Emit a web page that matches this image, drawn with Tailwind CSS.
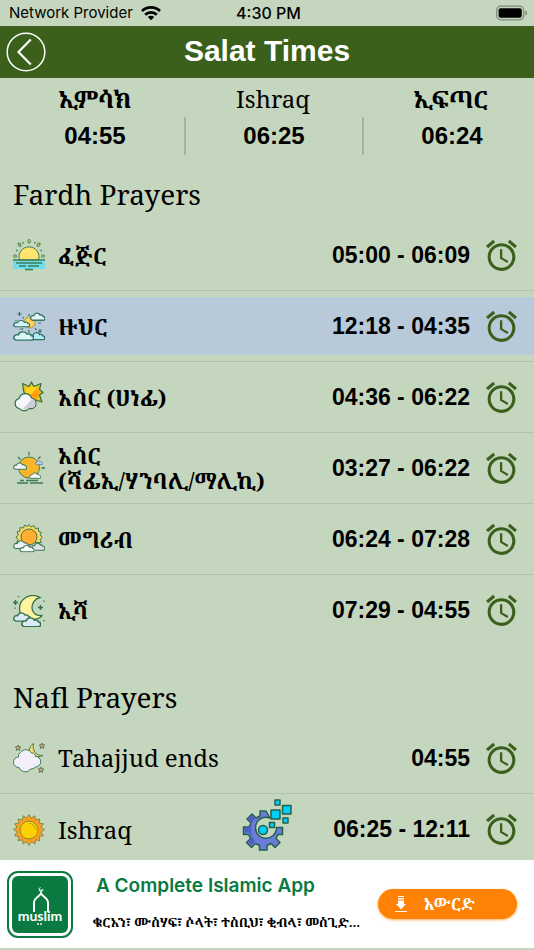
<!DOCTYPE html>
<html lang="am">
<head>
    <meta charset="UTF-8">
    <meta name="viewport" content="width=device-width, initial-scale=1.0">
    <title>Salat Times</title>
    <script src="https://cdn.jsdelivr.net/npm/@tailwindcss/browser@4"></script>
</head>
<body class="bg-[#c5d6be] text-black font-['Noto_Serif','Noto_Serif_Ethiopic','Liberation_Serif',serif]">
<!-- shared shapes -->
<svg class="hidden" aria-hidden="true">
    <symbol id="alarm" viewBox="0 0 24 24">
        <path fill="#3a601c" d="M22 5.72l-4.6-3.86-1.29 1.53 4.6 3.86L22 5.72zM7.88 3.39L6.6 1.86 2 5.71l1.29 1.53 4.59-3.85zM12.5 8H11v6l4.75 2.85.75-1.23-4-2.37V8zM12 4c-4.97 0-9 4.03-9 9s4.02 9 9 9c4.97 0 9-4.03 9-9s-4.03-9-9-9zm0 16c-3.87 0-7-3.13-7-7s3.13-7 7-7 7 3.13 7 7-3.13 7-7 7z"/>
    </symbol>
    <symbol id="cloud" viewBox="0 0 20 12" preserveAspectRatio="none">
        <path d="M3 11H17a2.500 2.500 0 0 0 .5-5 3 3 0 0 0-4-1.800A4.500 4.500 0 0 0 5 5 3 3 0 0 0 3 11Z"/>
    </symbol>
</svg>

<div class="h-screen flex flex-col">
    <!-- status bar -->
    <div class="h-[26px] shrink-0 grid grid-cols-3 items-center pl-[9px] pr-1.5 font-['Inter',sans-serif] text-[15px]">
        <div class="flex items-center gap-2 whitespace-nowrap">
            <span>Network Provider</span>
            <svg class="w-5 h-4 shrink-0" viewBox="0 0 20 16" fill="none" stroke="#000" stroke-width="2.800">
                <path d="M1 6a13 13 0 0 1 18 0"/>
                <path d="M4.200 9.700a8.400 8.400 0 0 1 11.600 0"/>
                <path d="M10 15.200 6.800 12a4.500 4.500 0 0 1 6.400 0Z" fill="#000" stroke="none"/>
            </svg>
        </div>
        <div class="text-center font-medium text-base">4:30 PM</div>
        <svg class="w-8 h-4 justify-self-end" viewBox="0 0 32 16">
            <rect x=".7" y="1.200" width="27" height="13.600" rx="4" fill="none" stroke="#7e8a79" stroke-width="1.200"/>
            <rect x="2.600" y="3.200" width="23.200" height="9.600" rx="2" fill="#000"/>
            <path d="M29.200 5.500a2.600 2.600 0 0 1 0 5Z" fill="#7e8a79"/>
        </svg>
    </div>

    <!-- header -->
    <header class="h-[52px] shrink-0 flex items-center bg-[#3a601c] px-1.5">
        <button class="w-10 h-10" aria-label="Back">
            <svg class="w-10 h-10" viewBox="0 0 40 40" fill="none" stroke="#fff">
                <circle cx="20" cy="20" r="18.800" stroke-width="1.500"/>
                <path d="M24.800 7.500 12.500 20 24.800 32.500" stroke-width="2.200"/>
            </svg>
        </button>
        <h1 class="flex-1 text-center text-white font-bold text-[30px] leading-10 pb-0.5 font-['Liberation_Sans',sans-serif] pr-10">Salat Times</h1>
    </header>

    <main class="flex-1 min-h-0 overflow-y-auto overflow-x-hidden [scrollbar-width:none]">
        <!-- top times -->
        <div class="grid grid-cols-3 text-center pt-[3px] ml-1.5 -mr-1.5">
            <div>
                <div class="h-9 leading-9 text-2xl font-bold">ኢምሳክ</div>
                <div class="h-[38px] leading-[38px] text-2xl font-bold font-['Liberation_Sans',sans-serif]">04:55</div>
            </div>
            <div>
                <div class="h-9 leading-9 text-2xl">Ishraq</div>
                <div class="h-[38px] leading-[38px] text-2xl font-bold font-['Liberation_Sans',sans-serif] border-l-2 border-[#a9aeab]">06:25</div>
            </div>
            <div>
                <div class="h-9 leading-9 text-2xl font-bold">ኢፍጣር</div>
                <div class="h-[38px] leading-[38px] text-2xl font-bold font-['Liberation_Sans',sans-serif] border-l-2 border-[#a9aeab]">06:24</div>
            </div>
        </div>

        <section>
            <h2 class="h-[65px] pt-4 px-[13px] leading-[46px] text-[28px]">Fardh Prayers</h2>
            <ul>
                <li class="h-[71px] flex items-center gap-[13px] pl-[13px] pr-3.5 border-b border-[#b1c2ae]">
                    <svg class="w-8 h-8 shrink-0" viewBox="0 0 32 32" fill="none" stroke="#3d7c55">
                        <rect y="21.500" width="32" height="8.500" fill="#6fdff0" stroke="none"/>
                        <path d="M6.500 21a10 10 0 1 1 19 0Z" fill="#ffe36e"/>
                        <path d="M0 21H32M3 24H29M6 27H13M15 27H26M12 30.500H20" stroke-width="1.300"/>
                        <g fill="#e8d84a">
                            <rect x="15" y=".5" width="2.200" height="3.500" rx="1"/>
                            <rect x="15" y=".5" width="2.200" height="3.500" rx="1" transform="rotate(40 16 17)"/>
                            <rect x="15" y=".5" width="2.200" height="3.500" rx="1" transform="rotate(-40 16 17)"/>
                            <rect x=".5" y="16" width="3" height="2.200" rx="1"/>
                            <rect x="28.500" y="16" width="3" height="2.200" rx="1"/>
                        </g>
                        <path d="M10 3v1.500M22 3v1.500M3 11.500h1.500M27.500 11.500H29" stroke-width="1.500"/>
                    </svg>
                    <span class="flex-1 text-[22px] font-bold">ፈጅር</span>
                    <time class="text-[23px] font-bold font-['Liberation_Sans',sans-serif]">05:00 - 06:09</time>
                    <button class="w-[37px] h-[37px]" aria-label="Alarm"><svg class="w-full h-full"><use href="#alarm"/></svg></button>
                </li>
                <li class="h-[71px] flex items-center border-b border-[#b1c2ae]">
                    <div class="h-[58px] flex-1 flex items-center gap-[13px] pl-[13px] pr-3.5 bg-[#b8c9da]">
                        <svg class="w-8 h-8 shrink-0" viewBox="0 0 32 32" fill="none" stroke="#2f7460">
                            <path d="M16 4v2M9.500 7l1.200 1.500M16 20v3M10 18l-1.500 2M22 18l1.500 2M25 13h3M6.500 2v4M4.500 4h4M27 19v4M25 21h4M3 10v1M7 18.500v1" stroke-width="1.200"/>
                            <circle cx="16.500" cy="12.500" r="5.500" fill="#ffd052" stroke="#a8913e"/>
                            <use href="#cloud" x="17" y="2" width="15" height="9" fill="#e2f6f8" stroke-width="1.700"/>
                            <use href="#cloud" x="0" y="9.500" width="17" height="8" fill="#d4f1f6" stroke-width="1.700"/>
                            <use href="#cloud" x="16" y="21.500" width="16" height="9" fill="#b5ecfa" stroke-width="1.700"/>
                            <use href="#cloud" x="0" y="20.500" width="21" height="10.500" fill="#dcf6fa" stroke-width="1.500"/>
                        </svg>
                        <span class="flex-1 text-[22px] font-bold">ዙህር</span>
                        <time class="text-[23px] font-bold font-['Liberation_Sans',sans-serif]">12:18 - 04:35</time>
                        <button class="w-[37px] h-[37px]" aria-label="Alarm"><svg class="w-full h-full"><use href="#alarm"/></svg></button>
                    </div>
                </li>
                <li class="h-[71px] flex items-center gap-[13px] pl-[13px] pr-3.5 border-b border-[#b1c2ae]">
                    <svg class="w-8 h-8 shrink-0" viewBox="0 0 32 32" stroke="#2f6c45" stroke-width="1.200" stroke-linejoin="round">
                        <path d="M18.500 1l2.200 4.500L28 2.500l-1.500 6 3.500 3-3.500 2.500 2.500 7-5-1.500-8-4-5-4-1.500-9 6.500 3Z" fill="#e6c81c"/>
                        <circle cx="19" cy="12.500" r="7" fill="#ffd21c" stroke="none"/>
                        <path d="M24 7.500a7 7 0 0 1-10 10Z" fill="#ff9d0a" stroke="none"/>
                        <path d="M6.500 27.500a5 5 0 0 1-.5-9.800 6.500 6.500 0 0 1 12.500-.7 5.500 5.500 0 0 1 1 10.500c-2 .5-3 0-3.500 0a6 6 0 0 1-9.500 0Z" fill="#f6f6f8"/>
                        <path d="M19 18a4.600 4.600 0 0 1-.5 9l-2.500 0a5 5 0 0 1-6 1Z" fill="#cfced6" stroke="none"/>
                    </svg>
                    <span class="flex-1 text-[22px] font-bold">አስር (ሀነፊ)</span>
                    <time class="text-[23px] font-bold font-['Liberation_Sans',sans-serif]">04:36 - 06:22</time>
                    <button class="w-[37px] h-[37px]" aria-label="Alarm"><svg class="w-full h-full"><use href="#alarm"/></svg></button>
                </li>
                <li class="h-[71px] flex items-center gap-[13px] pl-[13px] pr-3.5 border-b border-[#b1c2ae]">
                    <svg class="w-8 h-8 shrink-0" viewBox="0 0 32 32" fill="none" stroke="#3d7c55">
                        <path d="M16 0v3.500M5 5l2.500 2.500M27.500 4.500 25 7M28.500 16H32M4 31H15M17 31H30M7 28.500H11M13 28.500H25" stroke-width="1.300"/>
                        <circle cx="16" cy="15.500" r="10.500" fill="#fab627"/>
                        <use href="#cloud" x="0" y="10" width="14" height="8" fill="#f2f3fa" stroke-width="1.600"/>
                        <use href="#cloud" x="22" y="8" width="8" height="5" fill="#b9cbed" stroke="#6583a8" stroke-width="2"/>
                        <use href="#cloud" x="16" y="20" width="12" height="7" fill="#f2f3fa" stroke-width="1.600"/>
                    </svg>
                    <span class="flex-1 text-[22px] leading-[25px] font-bold">አስር<br>(ሻፊኢ/ሃንባሊ/ማሊኪ)</span>
                    <time class="text-[23px] font-bold font-['Liberation_Sans',sans-serif]">03:27 - 06:22</time>
                    <button class="w-[37px] h-[37px]" aria-label="Alarm"><svg class="w-full h-full"><use href="#alarm"/></svg></button>
                </li>
                <li class="h-[71px] flex items-center gap-[13px] pl-[13px] pr-3.5 border-b border-[#b1c2ae]">
                    <svg class="w-8 h-8 shrink-0" viewBox="0 0 32 32" stroke="#3d7c55" stroke-linejoin="round">
                        <path d="M16 1.500l2 2.500 3-1.500 1 3 3.500-.5 0 3.500 3 1-1.500 2.500 2.500 2.500-2.500 2 1.500 3-25 0 1.500-3-2-2.500 2.500-2-1.500-3 3-1 0-3.500 3.500.5 1-3 3 1.500Z" fill="#ffd75c"/>
                        <circle cx="16" cy="14" r="8" fill="#ffae31"/>
                        <use href="#cloud" x="0" y="16.500" width="17" height="10" fill="#eeedf3" stroke-width="1.400"/>
                        <use href="#cloud" x="18" y="19" width="14" height="9" fill="#e0dfe8" stroke-width="1.600"/>
                        <use href="#cloud" x="6.500" y="21.500" width="15" height="8" fill="#fafafa" stroke-width="1.600"/>
                    </svg>
                    <span class="flex-1 text-[22px] font-bold">መግሪብ</span>
                    <time class="text-[23px] font-bold font-['Liberation_Sans',sans-serif]">06:24 - 07:28</time>
                    <button class="w-[37px] h-[37px]" aria-label="Alarm"><svg class="w-full h-full"><use href="#alarm"/></svg></button>
                </li>
                <li class="h-[71px] flex items-center gap-[13px] pl-[13px] pr-3.5">
                    <svg class="w-8 h-8 shrink-0" viewBox="0 0 32 32" fill="none" stroke="#2f7449">
                        <path d="M27 2.500C17-3 6 4 6.500 14 7 22 15 26 21 24.500 26 24 29 21 29 20.500 16 22 16 5 27 2.500Z" fill="#fff2a0" stroke-width="1.300"/>
                        <path d="M2.500 5v5M0 7.500H5M27.500 10v5M25 12.500H30" stroke-width="1.500"/>
                        <path d="M5.500 1v1.200M2 12.500v1.200M31 5.500v1.200M31 25v1.200" stroke-width="1.300"/>
                        <use href="#cloud" x="0" y="16.500" width="18" height="10.500" fill="#dce9f6" stroke-width="1.500"/>
                        <use href="#cloud" x="8" y="21.500" width="20" height="11" fill="#dce9f6" stroke-width="1.500"/>
                    </svg>
                    <span class="flex-1 text-[22px] font-bold">ኢሻ</span>
                    <time class="text-[23px] font-bold font-['Liberation_Sans',sans-serif]">07:29 - 04:55</time>
                    <button class="w-[37px] h-[37px]" aria-label="Alarm"><svg class="w-full h-full"><use href="#alarm"/></svg></button>
                </li>
            </ul>
        </section>

        <section>
            <h2 class="h-[77px] pt-7 px-[13px] leading-[46px] text-[28px]">Nafl Prayers</h2>
            <ul>
                <li class="h-[71px] flex items-center gap-[13px] pl-[13px] pr-3.5 border-b border-[#b1c2ae]">
                    <svg class="w-8 h-8 shrink-0" viewBox="0 0 32 32" stroke="#3d7c55" stroke-linejoin="round">
                        <path d="M20.500 1.500C13 6 16 19 30 13.500 23 14 19 9 20.500 1.500Z" fill="#ffdb6b"/>
                        <g fill="#ef9c76" stroke-width=".9">
                            <path d="M5 3l.8 1.800 2 .2-1.500 1.400.5 2L5 7.400 3.200 8.400l.5-2L2.200 5l2-.2Z"/>
                            <path d="M29 1l.8 1.800 2 .2-1.500 1.400.5 2L29 5.400 27.200 6.400l.5-2L26.200 3l2-.2Z"/>
                            <path d="M28 25l.8 1.800 2 .2-1.500 1.400.5 2L28 29.400 26.200 30.400l.5-2L25.200 27l2-.2Z"/>
                        </g>
                        <path d="M6 25.500a5 5 0 0 1-.5-10.500 4 4 0 0 1 2-4.500 6.500 6.500 0 0 1 11 .5 3.500 3.500 0 0 1 4 3.500 5.200 5.200 0 0 1 0 10.500 6 6 0 0 1-5 2 6 6 0 0 1-9.500 1A4 4 0 0 1 6 25.500Z" fill="#f3effa"/>
                    </svg>
                    <span class="flex-1 text-2xl">Tahajjud ends</span>
                    <time class="text-[23px] font-bold font-['Liberation_Sans',sans-serif]">04:55</time>
                    <button class="w-[37px] h-[37px]" aria-label="Alarm"><svg class="w-full h-full"><use href="#alarm"/></svg></button>
                </li>
                <li class="h-[71px] flex items-center gap-[13px] pl-[13px] pr-3.5">
                    <svg class="w-8 h-8 shrink-0" viewBox="0 0 32 32" stroke="#6b7f3c" stroke-width=".8" stroke-linejoin="round">
                        <path d="M16 .5l2.300 3.700L21.900 1.700l.6 4.300 4.400-1-.9 4.100 4.300.7-2.500 3.500 3.700 2.200-3.700 2.500 2.500 3.700-4.300.8 1 4.200-4.400-1-.7 4.300-3.500-2.400L16 31.500l-2.300-3.900-3.600 2.400-.7-4.300-4.400 1 1-4.200-4.300-.8 2.500-3.700L.5 15.500l3.700-2.200-2.500-3.500L6 9.100 5 5l4.400 1 .7-4.300 3.600 2.500Z" fill="#ff9f22"/>
                        <circle cx="16" cy="16" r="9" fill="#ffcf06"/>
                        <path d="M16 9.300a6.500 6.500 0 0 1 6.500 6.500" fill="none" stroke="#a88f14"/>
                    </svg>
                    <span class="flex-1 text-2xl">Ishraq</span>
                    <time class="text-[23px] font-bold font-['Liberation_Sans',sans-serif]">06:25 - 12:11</time>
                    <button class="w-[37px] h-[37px]" aria-label="Alarm"><svg class="w-full h-full"><use href="#alarm"/></svg></button>
                </li>
            </ul>
        </section>
    </main>

    <!-- floating settings button -->
    <button class="fixed bottom-[99px] left-1/2 -translate-x-1/2 w-[50px] h-[52px]" aria-label="Settings">
        <svg class="w-[50px] h-[52px]" viewBox="0 0 50 52" stroke="#23604b" stroke-width="1.500" stroke-linejoin="round">
            <path d="M24 12H18v5l-4 2-4-4-5 5 4 4-2 4H1.500v7.500H6.500l2 4-4 4 5 5 4-4 4 2v4.500h7.500v-4.500l4-2 4 4 5-5-4-4 2-4h4.500v-7h-6a10.500 10.500 0 1 1-6.500-9.500Z" fill="#6b7bd8"/>
            <path d="M10 16.500l3 3-2.500 3.500C8 28 8.500 36 13 42l-3.500 4-3.500-3.500 4-4-2.500-5H2.500v-5H7.500l2.500-5-4-4Z" fill="#4b5fc8" stroke="none"/>
            <g fill="#00d0f7">
                <circle cx="21" cy="31" r="4.500"/>
                <rect x="29" y="11" width="9" height="9"/>
                <rect x="40.500" y="6.500" width="8.500" height="8.500"/>
                <rect x="33" y="1" width="5" height="5"/>
                <rect x="41" y="19" width="5" height="5"/>
                <rect x="27.500" y="23.500" width="5" height="5"/>
            </g>
        </svg>
    </button>

    <!-- ad banner -->
    <footer class="h-[90px] shrink-0 flex items-center bg-white border-b-2 border-[#c5d6be] pl-[7px] pr-[17px]">
        <svg class="w-[66px] h-[67px] shrink-0" viewBox="0 0 66 67">
            <rect x="1" y="1" width="64" height="65" rx="10" fill="#fff" stroke="#0a7a41" stroke-width="2"/>
            <rect x="5" y="5" width="56" height="57" rx="6" fill="#0a7a41"/>
            <path d="M27 41V31c0-4 4-4 7-8.500C37 27 41 27 41 31V41" fill="none" stroke="#fff" stroke-width="2"/>
            <path d="M34 24v-6" stroke="#fff"/>
            <path d="M33.500 16.500a2 2 0 1 0 2.500 1.500" fill="none" stroke="#fff"/>
            <text x="33" y="50" text-anchor="middle" fill="#fff" class="text-sm font-bold font-['Lato',sans-serif]">muslim</text>
            <circle cx="31" cy="53" r=".9" fill="#fff"/><circle cx="34" cy="53" r=".9" fill="#fff"/>
        </svg>
        <div class="flex-1 min-w-0 pl-5 whitespace-nowrap">
            <p class="pl-[3px] text-[19px] leading-7 mb-2 font-semibold text-[#0a7a41] font-['Inter',sans-serif]">A Complete Islamic App</p>
            <p class="text-[13px] leading-7 font-bold">ቁርአን፣ ሙስሃፍ፣ ሶላት፣ ተስቢህ፣ ቂብላ፣ መስጊድ...</p>
        </div>
        <button class="w-[139px] h-[30px] shrink-0 flex items-center rounded-full bg-[#ff8206] text-white shadow-sm shadow-orange-300 pl-4 gap-4">
            <svg class="w-3.5 h-4" viewBox="0 0 14 16" fill="#fff">
                <path d="M4 0h6v1h-6zM4 2h6v1.500h-6zM4 4.500h6V8H12l-5 5.500L2 8h2zM1 15h12v1H1z"/>
            </svg>
            <span class="text-base leading-[30px] font-bold">አውርድ</span>
        </button>
    </footer>
</div>
</body>
</html>
